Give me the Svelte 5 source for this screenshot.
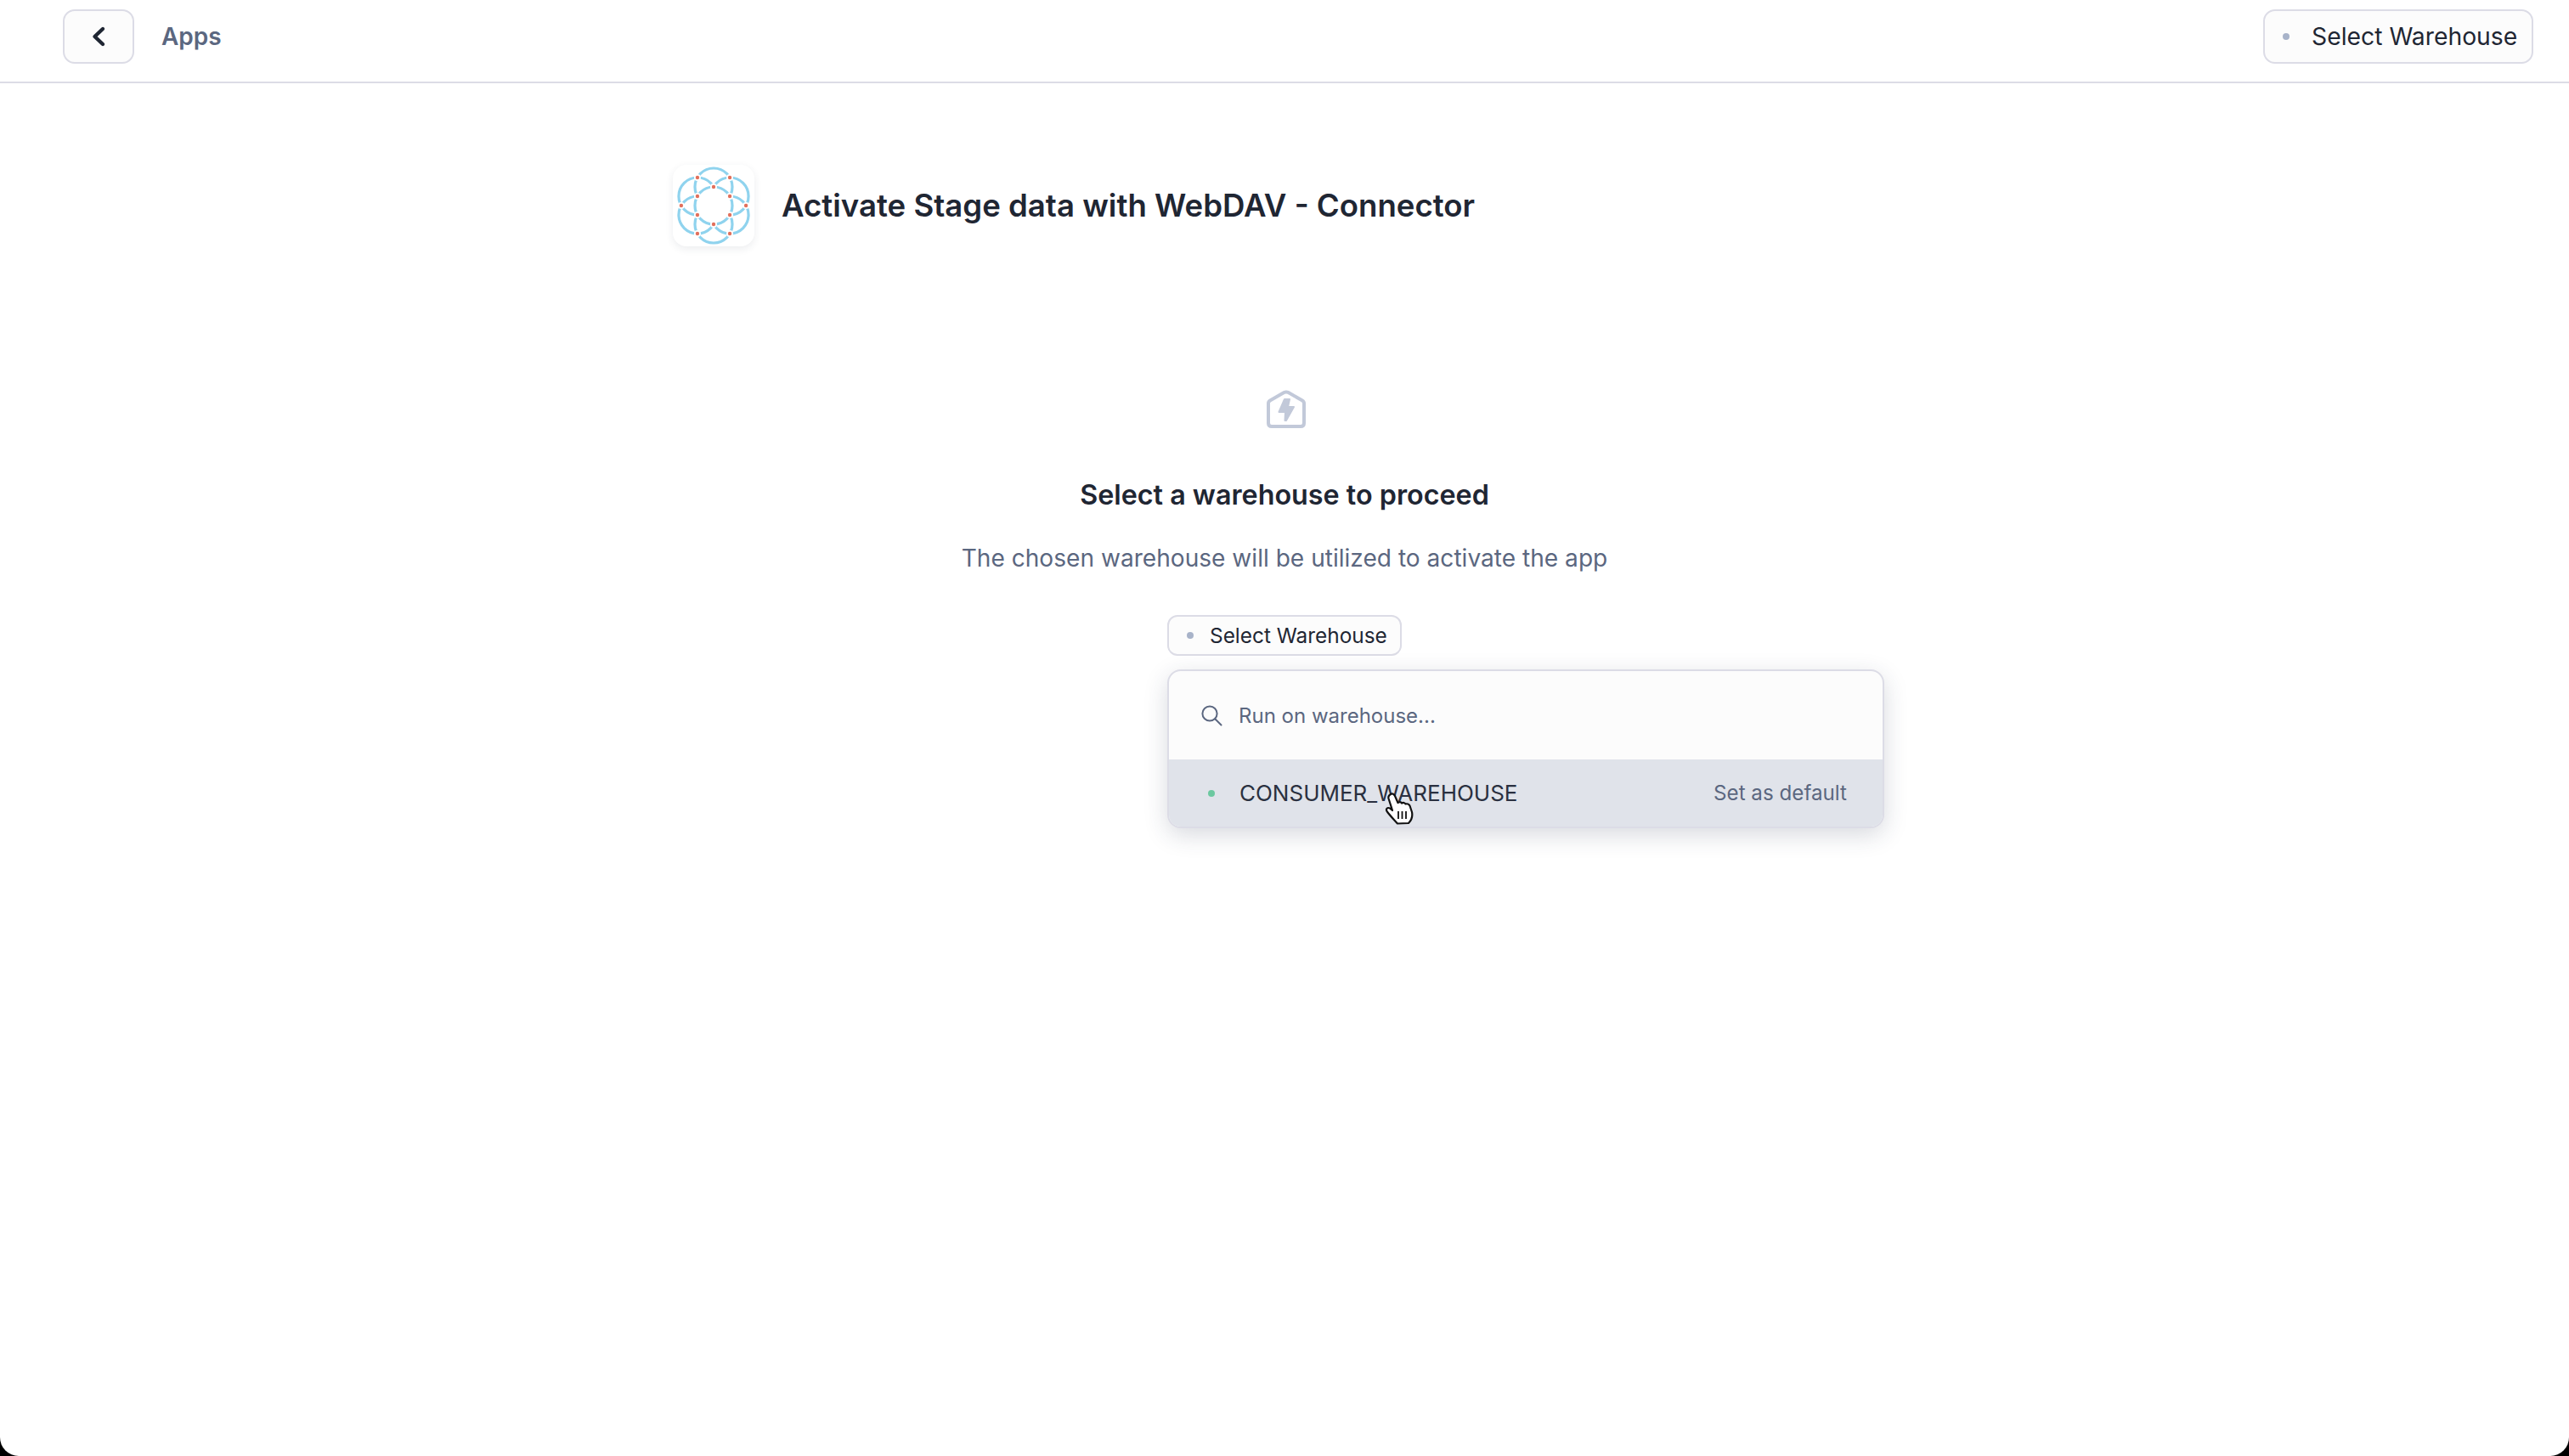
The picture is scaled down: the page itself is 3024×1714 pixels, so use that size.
<script>
	const petals = [90, 30, -30, -90, -150, 150].map((a) => {
		const r = (a * Math.PI) / 180;
		return { cx: 48 + 22 * Math.cos(r), cy: 48 - 22 * Math.sin(r) };
	});
	const nodes = [];
	for (let i = 0; i < 6; i++) {
		const inner = ((90 + i * 60) * Math.PI) / 180;
		const outer = ((60 + i * 60) * Math.PI) / 180;
		nodes.push({ x: 48 + 22 * Math.cos(inner), y: 48 - 22 * Math.sin(inner) });
		nodes.push({ x: 48 + 38.1 * Math.cos(outer), y: 48 - 38.1 * Math.sin(outer) });
	}
</script>

<div class="page">
	<header class="topbar">
		<div class="left">
			<button class="btn back" aria-label="Back">
				<svg width="20" height="26" viewBox="0 0 20 26" fill="none">
					<path d="M15 4 L5.5 13 L15 22" stroke="#1f2633" stroke-width="4.4" stroke-linecap="round" stroke-linejoin="round" />
				</svg>
			</button>
			<span class="crumb">Apps</span>
		</div>
		<button class="btn wh-top">
			<span class="dot"></span>
			<span>Select Warehouse</span>
		</button>
	</header>

	<main class="content">
		<div class="title-row">
			<div class="logo">
				<svg width="96" height="96" viewBox="0 0 96 96" fill="none">
					{#each petals as p}
						<circle cx={p.cx} cy={p.cy} r="22" stroke="#8fd3ee" stroke-width="3.2" />
					{/each}
					<circle cx="48" cy="48" r="22" fill="#fff" stroke="#8fd3ee" stroke-width="3.2" />
					{#each nodes as n}
						<circle cx={n.x} cy={n.y} r="4" fill="#fff" />
						<circle cx={n.x} cy={n.y} r="2.2" fill="#e2705c" />
					{/each}
				</svg>
			</div>
			<h1>Activate Stage data with WebDAV - Connector</h1>
		</div>

		<div class="empty">
			<svg class="house" width="48" height="50" viewBox="0 0 48 50" fill="none">
				<path d="M5 17.5 L21.5 8 Q24 6.8 26.5 8 L43 17.5 Q45 18.7 45 21 V44 Q45 48 41 48 H7 Q3 48 3 44 V21 Q3 18.7 5 17.5 Z" stroke="#c2c9d9" stroke-width="4" stroke-linejoin="round" />
				<path d="M22 16 H28 L26 25 H33 L24 41 H22.5 L23 31 H15.5 Z" fill="#c2c9d9" stroke="#c2c9d9" stroke-width="2" stroke-linejoin="round" />
			</svg>
			<h2>Select a warehouse to proceed</h2>
			<p>The chosen warehouse will be utilized to activate the app</p>
			<div class="picker">
				<button class="btn wh-small">
					<span class="dot"></span>
					<span>Select Warehouse</span>
				</button>
				<div class="popup">
					<div class="search">
						<svg width="26" height="26" viewBox="0 0 26 26" fill="none">
							<circle cx="11" cy="11" r="8.6" stroke="#5b6780" stroke-width="2" />
							<path d="M17.5 17.5 L24.5 24.5" stroke="#5b6780" stroke-width="2" stroke-linecap="round" />
						</svg>
						<span class="placeholder">Run on warehouse...</span>
					</div>
					<div class="item">
						<span class="dot green"></span>
						<span class="name">CONSUMER_WAREHOUSE</span>
						<span class="set">Set as default</span>
						<svg class="cursor" width="36" height="38" viewBox="0 0 36 38">
							<path d="M7 2 C9 0.8 11 1.8 12 4 L15.5 12 C17 10.5 19 11 20 12.5 C21.5 11.5 23.5 12 24.5 13.5 C26 13 28.5 13.5 29.5 15.5 L32 23 C33 28 31 33 28 36 L15 36.5 C12 33 6 27 2.5 22 C1 19.5 3 17 6 18.5 L9 21 L4.5 7 C4 5 5 3 7 2 Z" fill="#fff" stroke="#111" stroke-width="2.2" stroke-linejoin="round" />
							<path d="M16 22 V31 M20.5 22 V31 M25 22 V31" stroke="#111" stroke-width="1.8" />
						</svg>
					</div>
				</div>
			</div>
		</div>
	</main>
</div>

<style>
	:global(body) {
		margin: 0;
		background: #000;
		font-family: 'Inter', sans-serif;
	}

	.page {
		height: 1714px;
		background: #fff;
		border-radius: 0 0 22px 22px;
		overflow: hidden;
		color: #1f2633;
	}

	.topbar {
		display: flex;
		align-items: flex-start;
		justify-content: space-between;
		box-sizing: border-box;
		height: 98px;
		padding: 11px 42px 0 74px;
		border-bottom: 2px solid #dcdce6;
	}
	.left { display: flex; align-items: center; gap: 32px; }
	.crumb { font-size: 28px; font-weight: 600; color: #5b6780; }

	.btn {
		display: flex;
		align-items: center;
		box-sizing: border-box;
		background: #fcfcfc;
		border: 2px solid #dcdce6;
		color: #1f2633;
		font-family: inherit;
		padding: 0;
	}
	.back { width: 84px; height: 64px; border-radius: 14px; justify-content: center; }
	.wh-top {
		width: 318px;
		height: 64px;
		border-radius: 14px;
		padding-left: 21px;
		gap: 26px;
		font-size: 28.3px;
		font-weight: 400;
	}
	.wh-small {
		width: 276px;
		height: 48px;
		border-radius: 12px;
		padding-left: 21px;
		gap: 19px;
		font-size: 24.4px;
		font-weight: 400;
	}
	.dot { width: 8px; height: 8px; border-radius: 50%; background: #a8b3c9; flex: none; }
	.dot.green { background: #6cc8a0; }

	.content { width: 1440px; margin: 0 auto; }

	.title-row { display: flex; align-items: center; gap: 32px; margin-top: 96px; }
	.logo {
		width: 96px;
		height: 96px;
		border-radius: 16px;
		background: #fff;
		box-shadow: 0 3px 10px rgba(40, 50, 80, 0.09);
		flex: none;
	}
	.logo svg { display: block; }
	h1 { margin: 0; font-size: 36.6px; font-weight: 600; color: #1f2633; }

	.empty { display: flex; flex-direction: column; align-items: center; margin-top: 164px; }
	.house { display: block; margin-left: 3px; }
	h2 { margin: 59px 0 0; font-size: 32.3px; line-height: 40px; font-weight: 600; color: #1f2633; }
	.empty p { margin: 34px 0 0; font-size: 28.1px; line-height: 40px; color: #5b6780; }

	.picker { position: relative; margin-top: 47px; }

	.popup {
		position: absolute;
		top: 64px;
		left: 0;
		width: 844px;
		box-sizing: border-box;
		background: #fcfcfc;
		border: 2px solid #dcdce6;
		border-radius: 16px;
		overflow: visible;
		box-shadow: 0 8px 28px rgba(40, 50, 80, 0.18);
	}
	.search {
		display: flex;
		align-items: center;
		gap: 19px;
		height: 104px;
		padding-left: 37px;
	}
	.placeholder { font-size: 24px; color: #5b6780; }
	.item {
		position: relative;
		display: flex;
		align-items: center;
		height: 79px;
		padding: 0 42px 0 46px;
		background: #e0e3ea;
		border-radius: 0 0 14px 14px;
	}
	.name { margin-left: 29px; font-size: 26px; color: #2a3040; flex: 1; }
	.set { font-size: 24.2px; color: #5b6780; }
	.cursor { position: absolute; left: 254px; top: 39px; }
</style>
